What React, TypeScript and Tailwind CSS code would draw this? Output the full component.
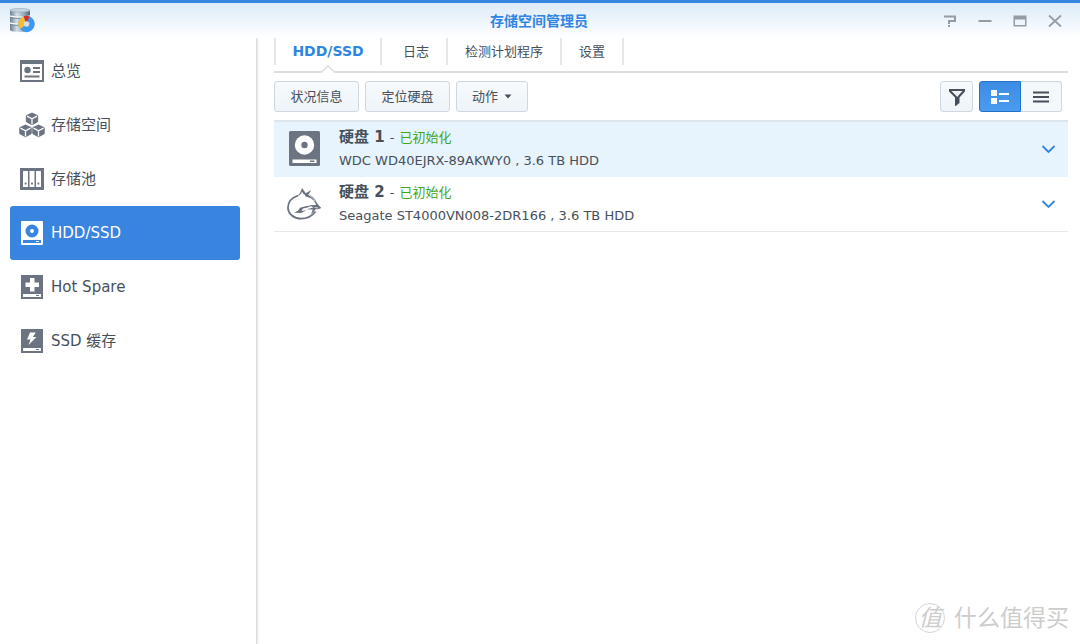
import React, { useState } from 'react';

type IconProps = { className?: string };

const AppLogo: React.FC = () => (
  <svg width="26" height="26" viewBox="0 0 26 26" aria-hidden="true">
    <defs>
      <linearGradient id="cylinder" x1="0" x2="1">
        <stop offset="0" stopColor="#6b8092" />
        <stop offset="0.35" stopColor="#d3dfe8" />
        <stop offset="0.7" stopColor="#94a9ba" />
        <stop offset="1" stopColor="#506678" />
      </linearGradient>
    </defs>
    <path d="M1 2v20c0 2.500 20 2.500 20 0V2z" fill="url(#cylinder)" />
    <ellipse cx="11" cy="2.300" rx="10" ry="1.800" fill="#c6d5e1" stroke="#8fa4b5" strokeWidth="0.600" />
    <path d="M1 8c3 1.500 17 1.500 20 0M1 15c3 1.500 17 1.500 20 0" fill="none" stroke="#f2f7fa" strokeWidth="1.500" />
    <path d="M1 9.200c3 1.500 17 1.500 20 0M1 16.200c3 1.500 17 1.500 20 0" fill="none" stroke="#5d7283" strokeWidth="0.800" />
    <circle cx="17.500" cy="16" r="5.500" fill="none" stroke="#3d98f0" strokeWidth="5.500" />
    <path d="M11.200 21.300A8.250 8.250 0 0 1 14.700 8.200L16.500 13.400a2.750 2.750 0 0 0-1.200 4.300z" fill="#f8bd2e" />
    <path d="M14.700 8.200a8.250 8.250 0 0 1 5.600 0L18.500 13.400h-2z" fill="#d92b2b" />
    <circle cx="17.500" cy="16" r="2.800" fill="#d5dfe6" />
  </svg>
);

const OverviewIcon: React.FC<IconProps> = ({ className }) => (
  <svg className={className} width="24" height="24" viewBox="0 0 24 24" fill="currentColor" aria-hidden="true">
    <path fillRule="evenodd" d="M0 1h24v22H0zM2 5v16h20V5z" />
    <circle cx="7.500" cy="11" r="3.200" />
    <path d="M13 8h7v2h-7zM13 12h7v2h-7zM4.500 16.500h15v2h-15z" />
  </svg>
);

const Cube: React.FC<{ x: number; y: number }> = ({ x, y }) => (
  <g transform={`translate(${x} ${y})`}>
    <path d="M6.500 0.500L12.200 3.200v6L6.500 12.300 0.800 9.200v-6z" stroke="currentColor" strokeWidth="1" strokeLinejoin="round" />
    <path d="M1.500 3.700L6.500 6.300l5-2.600M6.500 6.300v5.600" fill="none" stroke="#fff" strokeWidth="1.300" />
  </g>
);

const VolumeIcon: React.FC<IconProps> = ({ className }) => (
  <svg className={className} width="26" height="26" viewBox="0 0 26 26" fill="currentColor" aria-hidden="true">
    <Cube x={6.5} y={0.5} />
    <Cube x={0} y={12.5} />
    <Cube x={13} y={12.5} />
  </svg>
);

const PoolIcon: React.FC<IconProps> = ({ className }) => (
  <svg className={className} width="24" height="24" viewBox="0 0 24 24" fill="currentColor" aria-hidden="true">
    <path fillRule="evenodd" d="M0 1h24v22H0zM3 4v16h5V4zM9.500 4v16h5V4zM16 4v16h5V4z" />
    <path d="M4.700 15.500h1.800v2H4.700zM11.100 15.500h1.800v2h-1.800zM17.500 15.500h1.800v2h-1.800z" />
  </svg>
);

const DiskIcon: React.FC<IconProps> = ({ className }) => (
  <svg className={className} width="24" height="24" viewBox="0 0 24 24" fill="currentColor" aria-hidden="true">
    <path
      fillRule="evenodd"
      d="M2 0h20a1 1 0 0 1 1 1v22a1 1 0 0 1-1 1H2a1 1 0 0 1-1-1V1a1 1 0 0 1 1-1zM12 3.500a6.500 6.500 0 1 0 0 13 6.500 6.500 0 0 0 0-13zM12 8a2 2 0 1 1 0 4 2 2 0 0 1 0-4zM3 19v3h18v-3z"
    />
    <path d="M16 20h3v1h-3z" />
  </svg>
);

const SpareIcon: React.FC<IconProps> = ({ className }) => (
  <svg className={className} width="24" height="24" viewBox="0 0 24 24" fill="currentColor" aria-hidden="true">
    <path fillRule="evenodd" d="M1 0h22v24H1zM10 3v4.500H5.500v4.500H10v4.500h4.500V12H19V7.500h-4.500V3zM3 19v3h18v-3z" />
    <path d="M16 20h3v1h-3z" />
  </svg>
);

const CacheIcon: React.FC<IconProps> = ({ className }) => (
  <svg className={className} width="24" height="24" viewBox="0 0 24 24" fill="currentColor" aria-hidden="true">
    <path fillRule="evenodd" d="M1 0h22v24H1zM10 3.500L7 10.500h3.500L8.500 16l8-8H12.800l3-4.500zM3 19v3h18v-3z" />
    <path d="M16 20h3v1h-3z" />
  </svg>
);

const LargeDiskIcon: React.FC = () => (
  <svg width="36" height="36" viewBox="0 0 36 36" aria-hidden="true">
    <rect x="3" y="0" width="31" height="35" rx="1.500" fill="#6b7480" />
    <circle cx="18.500" cy="14" r="9.700" fill="#fff" />
    <circle cx="18.500" cy="14" r="3.200" fill="#6b7480" />
    <rect x="6.500" y="28.500" width="24" height="3.500" fill="#fff" />
    <path d="M24 29.500h4.500V31H24z" fill="#6b7480" />
  </svg>
);

const SeagateIcon: React.FC = () => (
  <svg width="36" height="36" viewBox="0 0 36 36" fill="#69727d" aria-hidden="true">
    <path d="M12 9.500C6.500 11.500 2 15.500 2 21.500c0 6.500 6 11.200 13 11.200 6.500 0 11.500-3.200 14.500-7.200" fill="none" stroke="#69727d" strokeWidth="1.800" />
    <path d="M10.500 10.500c2.500-1.500 4-4 5.500-8.500l3.800 5.300 1.200 2.200-3.500-1.500-1.500-2.500c-.7 2.500-2.500 4.500-5.500 5z" />
    <path d="M18.500 8l6.700-4-2.500 4.200c4.300 2 7 5 8 8.800L35.300 22c-2 1-3.800 1.300-5.800 1.200-1 1.800-2.500 3.500-4.500 4.800l1.800-4.500-6.300-.3 7-1.700-4.500-2.200 7-.3c-.8-4-4.500-7.500-10.500-8.500z" />
    <path d="M8 26.800l4-2 2-3 6.500-1.800 5.500-.5-4.500 2-4.500 1-1.500 2.500 5-.7-5.500 2.700z" />
    <path d="M28.500 21.500l3.500.4M22 8.500c3 1.500 5.500 3.700 7 6.500" fill="none" stroke="#fff" strokeWidth="0.700" />
  </svg>
);

const navItems = [
  { id: 'overview', label: '总览', Icon: OverviewIcon },
  { id: 'volume', label: '存储空间', Icon: VolumeIcon },
  { id: 'pool', label: '存储池', Icon: PoolIcon },
  { id: 'disk', label: 'HDD/SSD', Icon: DiskIcon },
  { id: 'spare', label: 'Hot Spare', Icon: SpareIcon },
  { id: 'cache', label: 'SSD 缓存', Icon: CacheIcon },
];

const tabs = [
  { id: 'disk', label: 'HDD/SSD', width: 'w-[106px]' },
  { id: 'log', label: '日志', width: 'w-[66px] pl-1' },
  { id: 'schedule', label: '检测计划程序', width: 'w-[114px]' },
  { id: 'settings', label: '设置', width: 'w-[62px]' },
];

const disks = [
  { name: '硬盘 1', status: '已初始化', model: 'WDC WD40EJRX-89AKWY0 , 3.6 TB HDD', Icon: LargeDiskIcon },
  { name: '硬盘 2', status: '已初始化', model: 'Seagate ST4000VN008-2DR166 , 3.6 TB HDD', Icon: SeagateIcon },
];

const toolButton =
  'h-[31px] rounded-[3px] border border-[#cdd8e0] bg-linear-to-b from-[#f7fafd] to-[#eef4f9] flex items-center justify-center';

const App: React.FC = () => {
  const [page, setPage] = useState('disk');
  const [tab, setTab] = useState('disk');
  const [view, setView] = useState('detail');
  const [selected, setSelected] = useState(0);

  return (
    <div className="h-screen flex flex-col overflow-hidden bg-white text-[#47505a] text-[13px] font-['DejaVu_Sans','Noto_Sans_CJK_SC',sans-serif]">
      {/* Title bar */}
      <header className="relative z-10 h-[38px] shrink-0 border-t-[3px] border-[#3685e0] bg-linear-to-b from-[#dcebf8] to-white grid grid-cols-[1fr_auto_1fr] items-center pl-[9px] pr-[18px]">
        <AppLogo />
        <h1 className="font-bold text-[14px] leading-5 pl-[7px] text-[#2f85e3]">存储空间管理员</h1>
        <div className="flex justify-end gap-[21px] text-[#959da3]">
          <button aria-label="Help">
            <svg width="14" height="14" viewBox="0 0 14 14" fill="none" stroke="currentColor" strokeWidth="2">
              <path d="M1 2.500h11v4.500H6v3M6 11v2" />
            </svg>
          </button>
          <button aria-label="Minimize">
            <svg width="14" height="14" viewBox="0 0 14 14" fill="none" stroke="currentColor" strokeWidth="2">
              <path d="M0.500 7h13" />
            </svg>
          </button>
          <button aria-label="Maximize">
            <svg width="14" height="14" viewBox="0 0 14 14" fill="currentColor">
              <path fillRule="evenodd" d="M0.500 1.500h13v11h-13zM2 5.500V11h10V5.500z" />
            </svg>
          </button>
          <button aria-label="Close">
            <svg width="14" height="14" viewBox="0 0 14 14" fill="none" stroke="currentColor" strokeWidth="1.700">
              <path d="M1 1.500l12 11M13 1.500L1 12.500" />
            </svg>
          </button>
        </div>
      </header>

      <div className="flex-1 flex min-h-0">
        {/* Sidebar */}
        <nav className="w-[257px] shrink-0 border-r border-[#dadde0] shadow-[0_0_3px_#c8ccd0] pt-[6px] pl-[10px] pr-4">
          {navItems.map(({ id, label, Icon }) => (
            <button
              key={id}
              onClick={() => setPage(id)}
              className={`w-full h-[54px] rounded-[3px] flex items-center pl-[9px] gap-[7px] text-[15px] ${page === id ? 'bg-[#3884df] text-white' : ''}`}
            >
              <span className="w-[25px] flex justify-center">
                <Icon className={page === id ? 'shrink-0 text-white' : 'shrink-0 text-[#6b7480]'} />
              </span>
              {label}
            </button>
          ))}
        </nav>

        <main className="flex-1 min-w-0 pl-[17px] pr-3">
          {/* Tabs */}
          <div className="h-[35px] border-b-2 border-[#dcdfe2]">
            <div className="flex w-fit h-[27px] border-l-2 border-[#e3e7ec]" role="tablist">
              {tabs.map(({ id, label, width }) => (
                <button
                  key={id}
                  role="tab"
                  aria-selected={tab === id}
                  onClick={() => setTab(id)}
                  className={`relative border-r-2 border-[#e3e7ec] ${width} ${tab === id ? 'font-bold text-[14px] text-[#2f85e3]' : ''}`}
                >
                  {label}
                  {tab === id && (
                    <svg className="absolute left-1/2 top-full -translate-x-1/2" width="14" height="8" viewBox="0 0 14 8" aria-hidden="true">
                      <path d="M0 8L7 1l7 7z" fill="#fff" />
                      <path d="M0 7.500L7 1l7 6.500" fill="none" stroke="#dcdfe2" strokeWidth="1.500" />
                    </svg>
                  )}
                </button>
              ))}
            </div>
          </div>

          {/* Toolbar */}
          <div className="flex items-center gap-[6px] pt-2 pb-2 pr-[6px]">
            <button className={`${toolButton} w-[85px]`}>状况信息</button>
            <button className={`${toolButton} w-[85px]`}>定位硬盘</button>
            <button className={`${toolButton} w-[72px] gap-[6px]`}>
              动作
              <svg width="8" height="5" viewBox="0 0 8 5" fill="currentColor" aria-hidden="true">
                <path d="M0.500 0.500h7L4 4.500z" />
              </svg>
            </button>
            <button aria-label="Filter" className={`${toolButton} w-[33px] ml-auto`}>
              <svg width="18" height="18" viewBox="0 0 18 18" fill="none" stroke="currentColor" strokeWidth="2" aria-hidden="true">
                <path d="M2 2h14v1l-5.500 6v5.500L8 16.500V9L2 3z" />
                <path d="M9.300 9v6" />
              </svg>
            </button>
            <div className="flex">
              <button
                aria-label="Detail view"
                onClick={() => setView('detail')}
                className={`h-[31px] w-[42px] rounded-l-[3px] border flex items-center justify-center ${view === 'detail' ? 'border-[#2472c8] bg-linear-to-b from-[#3c8ce4] to-[#4a9cf0] text-white' : 'border-[#cdd8e0] bg-[#f3f8fb]'}`}
              >
                <svg width="18" height="14" viewBox="0 0 18 14" fill="currentColor" aria-hidden="true">
                  <path d="M0 0h6v6H0zM0 8h6v6H0zM8 3h10v2H8zM8 10h10v2H8z" />
                </svg>
              </button>
              <button
                aria-label="List view"
                onClick={() => setView('list')}
                className={`h-[31px] w-[41px] rounded-r-[3px] border flex items-center justify-center ${view === 'list' ? 'border-[#2472c8] bg-linear-to-b from-[#3c8ce4] to-[#4a9cf0] text-white' : 'border-l-0 border-[#cdd8e0] bg-[#f3f8fb]'}`}
              >
                <svg width="16" height="12" viewBox="0 0 16 12" fill="currentColor" aria-hidden="true">
                  <path d="M0 0.500h16v2H0zM0 5h16v2H0zM0 9.500h16v2H0z" />
                </svg>
              </button>
            </div>
          </div>

          {/* Disks */}
          <ul className="border-t-2 border-[#dde6ed]">
            {disks.map(({ name, status, model, Icon }, i) => (
              <li
                key={name}
                onClick={() => setSelected(i)}
                className={`h-[55px] flex items-center border-b pl-3 pr-3 ${selected === i ? 'bg-[#e7f4fd] border-[#e7f4fd]' : 'border-[#e6e9ec]'}`}
              >
                <Icon />
                <div className="ml-[17px] pb-[2px] flex-1 min-w-0">
                  <p className="leading-6 flex items-baseline gap-[5px]">
                    <strong className="text-[15px]">{name}</strong>
                    <span>-</span>
                    <span className="text-[#3fa51c]">{status}</span>
                  </p>
                  <p className="leading-[22px]">{model}</p>
                </div>
                <button aria-label={`Expand ${name}`}>
                  <svg width="15" height="9" viewBox="0 0 15 9" fill="none" stroke="#2f85e3" strokeWidth="1.800" aria-hidden="true">
                    <path d="M1.500 1l6 6 6-6" />
                  </svg>
                </button>
              </li>
            ))}
          </ul>
        </main>
      </div>

      {/* Watermark */}
      <div className="absolute right-[11px] bottom-[10px] flex items-center gap-[9px] text-[#cdcdcd] pointer-events-none">
        <span className="size-[30px] rounded-full border border-[#d4d4d4] flex items-center justify-center text-[23px] leading-6 italic">值</span>
        <span className="text-[23px] leading-8">什么值得买</span>
      </div>
    </div>
  );
};

export default App;
